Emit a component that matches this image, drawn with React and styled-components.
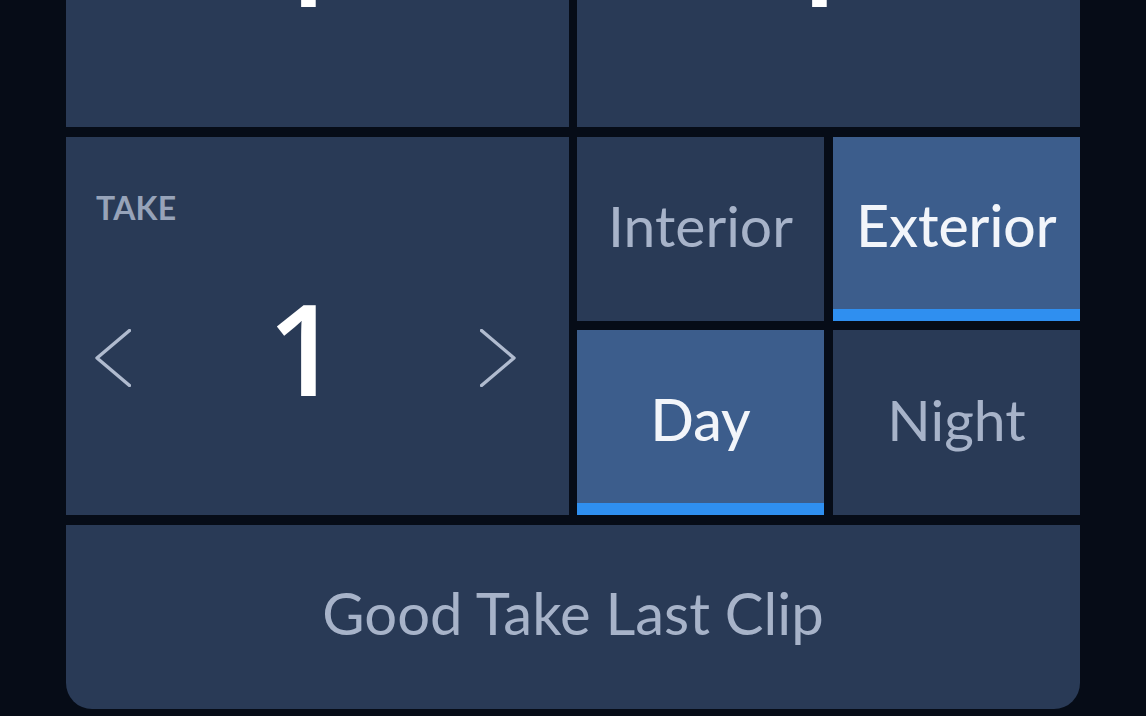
import React from "react";
import styled, { createGlobalStyle } from "styled-components";

const Global = createGlobalStyle`
  html, body { margin: 0; padding: 0; background: #060c17; overflow: hidden; }
  body { font-family: Lato, "Noto Sans", sans-serif; }
  * { box-sizing: border-box; }
`;

const Page = styled.div`
  width: 1146px;
  height: 716px;
  overflow: hidden;
  background: #060c17;
`;

const Panel = styled.div`
  margin: -252px 66px 0 66px;
  display: flex;
  flex-direction: column;
  gap: 10px;
`;

const Row = styled.div`
  display: grid;
  grid-template-columns: 503px 503px;
  gap: 8px;
  height: ${(p) => p.$h}px;
`;

const Tile = styled.div`
  background: #293a56;
  display: flex;
  flex-direction: column;
  color: #a9b5cb;
`;

const Label = styled.div`
  padding: 54px 0 0 30px;
  font-size: 32px;
  line-height: 34px;
  font-weight: 700;
  color: #97a3b9;
  letter-spacing: 0.2px;
`;

const ValueRow = styled.div`
  flex: 1;
  display: flex;
  align-items: center;
  padding: 0 53px 25px 29px;
`;

const Value = styled.div`
  flex: 1;
  text-align: center;
  font-family: "Open Sans", "Noto Sans", sans-serif;
  font-size: 126px;
  font-weight: 600;
  line-height: 1;
  color: #ffffff;
  margin: 0 4px 22px 0;
`;

const ArrowBtn = styled.div`
  width: 36px;
  height: 58px;
  display: flex;
  svg { display: block; }
`;

const ToggleGrid = styled.div`
  display: grid;
  grid-template-columns: 247px 247px;
  grid-template-rows: 184px 185px;
  column-gap: 9px;
  row-gap: 9px;
`;

const Toggle = styled.div`
  background: ${(p) => (p.$active ? "#3c5d8c" : "#293a56")};
  color: ${(p) => (p.$active ? "#f2f5fa" : "#a7b3c9")};
  border-bottom: 12px solid ${(p) => (p.$active ? "#2f8ff0" : "transparent")};
  display: flex;
  align-items: center;
  justify-content: center;
  padding-top: 4px;
  font-size: 57px;
  font-weight: ${(p) => (p.$active ? 500 : 400)};
`;

const Wide = styled.div`
  height: 184px;
  background: #293a56;
  border-radius: 0 0 26px 26px;
  display: flex;
  align-items: center;
  justify-content: center;
  padding-bottom: 10px;
  color: #a7b3c9;
  font-size: 58px;
`;

const Chevron = ({ dir }) => (
  <svg width="36" height="58" viewBox="0 0 36 58" fill="none">
    <path
      d={dir === "left" ? "M34.5 1.5 L2 29 L34.5 56.5" : "M1.5 1.5 L34 29 L1.5 56.5"}
      stroke="#b0bbcf"
      strokeWidth="3.4"
      strokeLinecap="round"
      strokeLinejoin="round"
    />
  </svg>
);

const Counter = ({ label, value }) => (
  <Tile>
    <Label>{label}</Label>
    <ValueRow>
      <ArrowBtn>
        <Chevron dir="left" />
      </ArrowBtn>
      <Value>{value}</Value>
      <ArrowBtn>
        <Chevron dir="right" />
      </ArrowBtn>
    </ValueRow>
  </Tile>
);

export default function App() {
  return (
    <Page>
      <Global />
      <Panel>
        <Row $h={379}>
          <Counter label="SCENE" value="1" />
          <Counter label="SHOT" value="1" />
        </Row>
        <Row $h={378}>
          <Counter label="TAKE" value="1" />
          <ToggleGrid>
            <Toggle>Interior</Toggle>
            <Toggle $active>Exterior</Toggle>
            <Toggle $active>Day</Toggle>
            <Toggle>Night</Toggle>
          </ToggleGrid>
        </Row>
        <Wide>Good Take Last Clip</Wide>
      </Panel>
    </Page>
  );
}
